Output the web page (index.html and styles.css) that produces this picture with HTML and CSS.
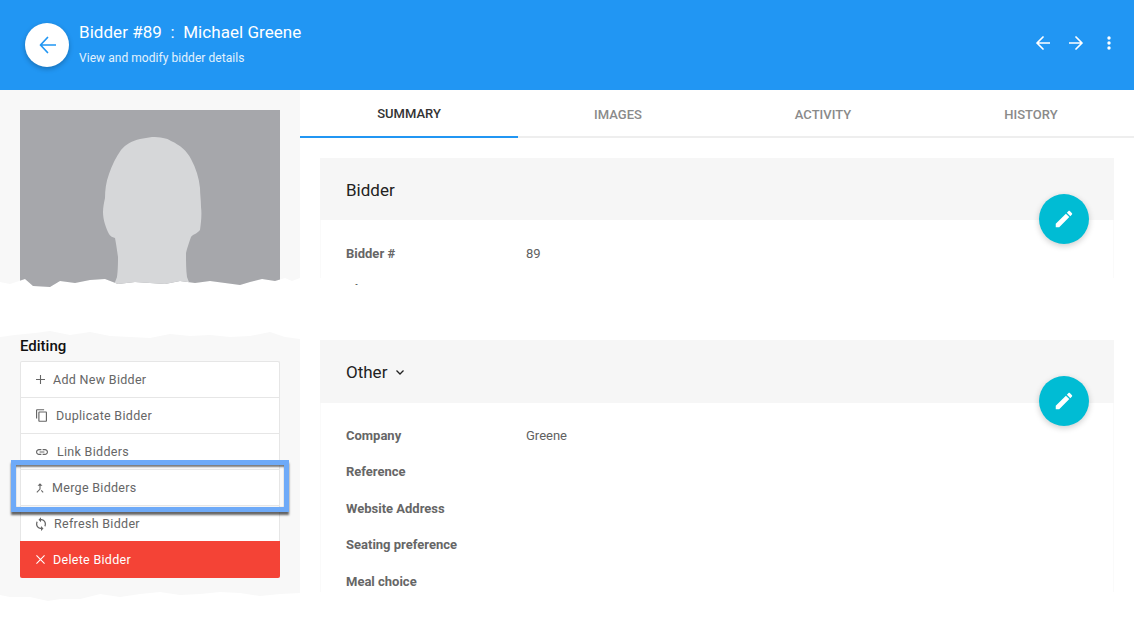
FILE: index.html
```html
<!DOCTYPE html>
<html lang="en">
<head>
  <meta charset="UTF-8" />
  <title>Bidder #89 - Michael Greene</title>
  <link rel="stylesheet" href="styles.css">
</head>
<body>

  <header class="topbar">
    <button class="back-btn" aria-label="Back">
      <svg viewBox="-1 0 18 18" width="18" height="18"><path d="M17 9H1.500M8.500 1.500L1.500 9l7 7.500" class="line"/></svg>
    </button>
    <div class="topbar-text">
      <h1>Bidder #89 &nbsp;:&nbsp; Michael Greene</h1>
      <p>View and modify bidder details</p>
    </div>
    <div class="topbar-actions">
      <svg viewBox="0 0 14 14" width="14" height="14"><path d="M13.500 7H1M7 1L1 7l6 6" class="line"/></svg>
      <svg viewBox="0 0 14 14" width="14" height="14"><path d="M.5 7H13M7 1l6 6-6 6" class="line"/></svg>
      <svg viewBox="0 0 4 14" width="4" height="14"><circle cx="2" cy="2" r="1.700"/><circle cx="2" cy="7" r="1.700"/><circle cx="2" cy="12" r="1.700"/></svg>
    </div>
  </header>

  <main class="layout">
    <aside class="sidebar">
      <div class="side-top">
        <svg class="photo" viewBox="0 0 260 180" width="260" height="180">
          <rect width="260" height="180" fill="#a6a7ab"/>
          <path d="M132 27 C140 27 147 28 151 31 C160 35 167 41 171 49 C176 58 179 68 180 78 C180 84 181 90 181 97 C182 104 181 113 180 120 C177 124 173 124 171 127 C169 133 167 138 166 143 C166 150 166 160 167 167 L172 180 L92 180 L97 167 C98 160 98 152 98 147 C97 140 96 133 95 128 C92 127 90 126 89 124 C86 118 83 110 83 102 C83 97 84 93 85 88 C85 80 86 72 89 64 C92 55 96 47 101 40 C106 34 112 31 120 29 Z" fill="#d6d7d9"/>
        </svg>
      </div>

      <div class="side-bottom">
        <h3>Editing</h3>
        <ul class="actions">
          <li>
            <span class="icon w-add"><svg viewBox="0 0 10 10" width="9" height="9"><path d="M5 0v10M0 5h10" class="thin"/></svg></span>
            Add New Bidder
          </li>
          <li>
            <span class="icon w-copy"><svg viewBox="2 1 19 22" width="11" height="13"><path d="M16 1H4c-1.100 0-2 .9-2 2v14h2V3h12V1zm3 4H8c-1.100 0-2 .9-2 2v14c0 1.100.9 2 2 2h11c1.100 0 2-.9 2-2V7c0-1.100-.9-2-2-2zm0 16H8V7h11v14z"/></svg></span>
            Duplicate Bidder
          </li>
          <li>
            <span class="icon w-link"><svg viewBox="2 7 20 10" width="12" height="6"><path d="M3.900 12c0-1.710 1.390-3.100 3.100-3.100h4V7H7c-2.760 0-5 2.240-5 5s2.240 5 5 5h4v-1.900H7c-1.710 0-3.100-1.390-3.100-3.100zM8 13h8v-2H8v2zm9-6h-4v1.900h4c1.710 0 3.100 1.390 3.100 3.100s-1.390 3.100-3.100 3.100h-4V17h4c2.760 0 5-2.240 5-5s-2.240-5-5-5z"/></svg></span>
            Link Bidders
          </li>
          <li class="highlighted">
            <span class="icon w-merge"><svg viewBox="5 3 14 18" width="8" height="10"><path d="M17 20.410L18.410 19 15 15.590 13.590 17 17 20.410zM7.500 8H11v5.590L5.590 19 7 20.410l6-6V8h3.500L12 3.500 7.500 8z"/></svg></span>
            Merge Bidders
            <div class="callout"></div>
          </li>
          <li>
            <span class="icon w-sync"><svg viewBox="4 1 16 22" width="10" height="14"><path d="M12 4V1L8 5l4 4V6c3.310 0 6 2.690 6 6 0 1.010-.25 1.970-.7 2.800l1.460 1.460C19.540 15.030 20 13.570 20 12c0-4.420-3.580-8-8-8zm0 14c-3.310 0-6-2.690-6-6 0-1.010.25-1.970.7-2.800L5.240 7.740C4.460 8.970 4 10.430 4 12c0 4.420 3.580 8 8 8v3l4-4-4-4v3z"/></svg></span>
            Refresh Bidder
          </li>
          <li class="danger">
            <span class="icon w-add"><svg viewBox="0 0 10 10" width="9" height="9"><path d="M.5.5l9 9M9.500.5l-9 9" class="thin"/></svg></span>
            Delete Bidder
          </li>
        </ul>
      </div>
    </aside>

    <section class="content">
      <nav class="tabs">
        <a class="active">SUMMARY</a>
        <a>IMAGES</a>
        <a>ACTIVITY</a>
        <a>HISTORY</a>
      </nav>

      <div class="card card-short">
        <div class="card-head">Bidder</div>
        <button class="fab" aria-label="Edit">
          <svg viewBox="0 0 24 24" width="24" height="24"><path d="M3 17.250V21h3.750L17.810 9.940l-3.750-3.750L3 17.250zM20.710 7.040c.39-.39.39-1.020 0-1.410l-2.340-2.340c-.39-.39-1.020-.39-1.410 0l-1.830 1.830 3.750 3.750 1.830-1.830z"/></svg>
        </button>
        <div class="card-body">
          <div class="row"><b>Bidder #</b><span>89</span></div>
          <div class="row"><b>Alternate</b><span></span></div>
        </div>
      </div>

      <div class="card card-tall">
        <div class="card-head">Other
          <svg class="chev" viewBox="0 0 8 5" width="8" height="5"><path d="M.5.5L4 4 7.500.5"/></svg>
        </div>
        <button class="fab" aria-label="Edit">
          <svg viewBox="0 0 24 24" width="24" height="24"><path d="M3 17.250V21h3.750L17.810 9.940l-3.750-3.750L3 17.250zM20.710 7.040c.39-.39.39-1.020 0-1.410l-2.340-2.340c-.39-.39-1.020-.39-1.410 0l-1.830 1.830 3.750 3.750 1.830-1.830z"/></svg>
        </button>
        <div class="card-body">
          <div class="row"><b>Company</b><span>Greene</span></div>
          <div class="row"><b>Reference</b><span></span></div>
          <div class="row"><b>Website Address</b><span></span></div>
          <div class="row"><b>Seating preference</b><span></span></div>
          <div class="row"><b>Meal choice</b><span></span></div>
        </div>
      </div>
    </section>
  </main>

</body>
</html>
```

FILE: styles.css
```css
* {
  box-sizing: border-box;
}

html, body {
  height: 627px;
  overflow: hidden;
}

body {
  margin: 0;
  font-family: Roboto, 'Liberation Sans', sans-serif;
  color: #616161;
  background: #fff;
}

/* top bar */
.topbar {
  height: 90px;
  background: #2196f3;
  color: #fff;
  display: flex;
  align-items: center;
  padding: 0 23px 0 25px;
}

.line {
  fill: none;
  stroke-width: 1.700;
  stroke-linecap: round;
  stroke-linejoin: round;
}

.back-btn {
  width: 44px;
  height: 44px;
  border: none;
  border-radius: 50%;
  background: #fff;
  box-shadow: 0 2px 5px rgba(0,0,0,0.25);
  padding: 0;
  display: flex;
  align-items: center;
  justify-content: center;
}

.back-btn .line {
  stroke: #2196f3;
}

.topbar-text {
  margin: 0 0 4px 10px;
  flex: 1;
}

.topbar-text h1 {
  margin: 0;
  font-size: 17px;
  font-weight: 400;
  line-height: 22px;
  letter-spacing: 0.05px;
}

.topbar-text p {
  margin: 7px 0 0;
  font-size: 12px;
  line-height: 16px;
  letter-spacing: 0.05px;
  color: #e3f2fd;
}

.topbar-actions {
  display: flex;
  align-items: center;
  gap: 19px;
  margin-bottom: 5px;
}

.topbar-actions svg {
  fill: #fff;
}

.topbar-actions svg:last-child {
  margin-left: 5px;
}

.topbar-actions .line {
  stroke: #fff;
}

/* page columns */
.layout {
  display: grid;
  grid-template-columns: 300px 1fr;
  height: 537px;
}

.side-top {
  height: 198px;
  padding: 20px 20px 0;
  background: #f8f8f8;
  overflow: hidden;
  clip-path: polygon(0 0, 300px 0, 300px 188px, 292px 191px, 285px 188px, 275px 191px, 262px 189px, 250px 192px, 240px 195px, 225px 193px, 210px 191px, 195px 193px, 180px 191px, 165px 194px, 150px 193px, 135px 192px, 118px 194px, 105px 189px, 90px 190px, 75px 193px, 60px 191px, 50px 197px, 33px 196px, 25px 189px, 10px 194px, 0 192px);
}

.photo {
  display: block;
}

.side-bottom {
  height: 272px;
  margin-top: 42px;
  padding: 6px 20px 0;
  background: #f8f8f8;
  clip-path: polygon(0 7px, 15px 5px, 35px 3px, 50px 1px, 70px 5px, 90px 2px, 110px 6px, 130px 7px, 150px 8px, 170px 4px, 190px 6px, 210px 5px, 230px 7px, 250px 6px, 270px 2px, 285px 7px, 300px 9px, 300px 263px, 280px 264px, 260px 266px, 240px 263px, 220px 262px, 200px 264px, 180px 265px, 160px 262px, 140px 264px, 120px 267px, 100px 264px, 80px 269px, 60px 269px, 48px 271px, 30px 267px, 10px 267px, 0 265px);
}

.side-bottom h3 {
  margin: 0 0 5px;
  font-size: 15px;
  font-weight: 500;
  line-height: 20px;
  color: #111;
}

/* editing buttons */
.actions {
  list-style: none;
  margin: 0;
  padding: 0;
  background: #fff;
  border: 1px solid #e6e6e6;
  border-bottom: none;
  border-radius: 2px;
}

.actions li {
  position: relative;
  height: 36px;
  padding-left: 15px;
  display: flex;
  align-items: center;
  border-top: 1px solid #e6e6e6;
  font-size: 12.500px;
  letter-spacing: 0.3px;
  color: #666;
}

.actions li:first-child {
  height: 35px;
  border-top: none;
}

.actions .danger {
  height: 37px;
  margin: 0 -1px;
  padding-left: 16px;
  border: none;
  border-radius: 0 0 2px 2px;
  background: #f44336;
  color: #fff;
}

.icon {
  display: flex;
  align-items: center;
  flex: none;
}

.icon svg {
  fill: #666;
}

.thin {
  fill: none;
  stroke: #666;
  stroke-width: 1.200;
}

.danger .thin {
  stroke: #fff;
}

.w-add { width: 17px; }
.w-copy { width: 20px; }
.w-link { width: 21px; }
.w-merge { width: 16px; }
.w-sync { width: 18px; }

.callout {
  position: absolute;
  left: -10px;
  right: -10px;
  top: -10px;
  bottom: -7px;
  border: 5px solid #6eaaf8;
  box-shadow: 0 3px 2px rgba(0,0,0,0.6), inset 0 3px 2px -1px rgba(70,70,70,0.7), inset 0 0 1px rgba(0,0,0,0.35);
}

/* right side */
.content {
  min-width: 0;
}

.tabs {
  display: grid;
  grid-template-columns: 218px 200px 210px 206px;
  height: 48px;
  border-bottom: 2px solid #eee;
}

.tabs a {
  height: 48px;
  display: flex;
  align-items: center;
  justify-content: center;
  font-size: 13px;
  font-weight: 500;
  color: #8a8a8a;
}

.tabs .active {
  color: #333;
  border-bottom: 2px solid #2196f3;
}

.card {
  position: relative;
  margin-left: 20px;
  width: 794px;
  overflow: hidden;
}

.card-short {
  margin-top: 20px;
  height: 127px;
}

.card-tall {
  margin-top: 55px;
  height: 252px;
}

.card-head {
  height: 62px;
  padding: 1px 0 0 26px;
  display: flex;
  align-items: center;
  gap: 9px;
  background: #f6f6f6;
  font-size: 17px;
  color: #222;
}

.card-tall .card-head {
  height: 63px;
}

.chev {
  fill: none;
  stroke: #222;
  stroke-width: 1.300;
}

.card-body {
  height: 58px;
  padding: 15px 25px 0;
  border-left: 1px solid #fafafa;
  border-right: 1px solid #fafafa;
}

.card-tall .card-body {
  height: 189px;
  padding-top: 14px;
}

.row {
  display: grid;
  grid-template-columns: 180px 1fr;
  height: 36.500px;
  align-items: center;
  font-size: 13px;
}

.row b {
  font-weight: 700;
  color: #666;
}

.fab {
  position: absolute;
  top: 36px;
  right: 25px;
  width: 50px;
  height: 50px;
  padding: 0;
  border: none;
  border-radius: 50%;
  background: #00bcd4;
  box-shadow: 0 2px 6px rgba(0,0,0,0.2);
  display: flex;
  align-items: center;
  justify-content: center;
}

.fab svg {
  fill: #fff;
  width: 22px;
  height: 22px;
}
```
